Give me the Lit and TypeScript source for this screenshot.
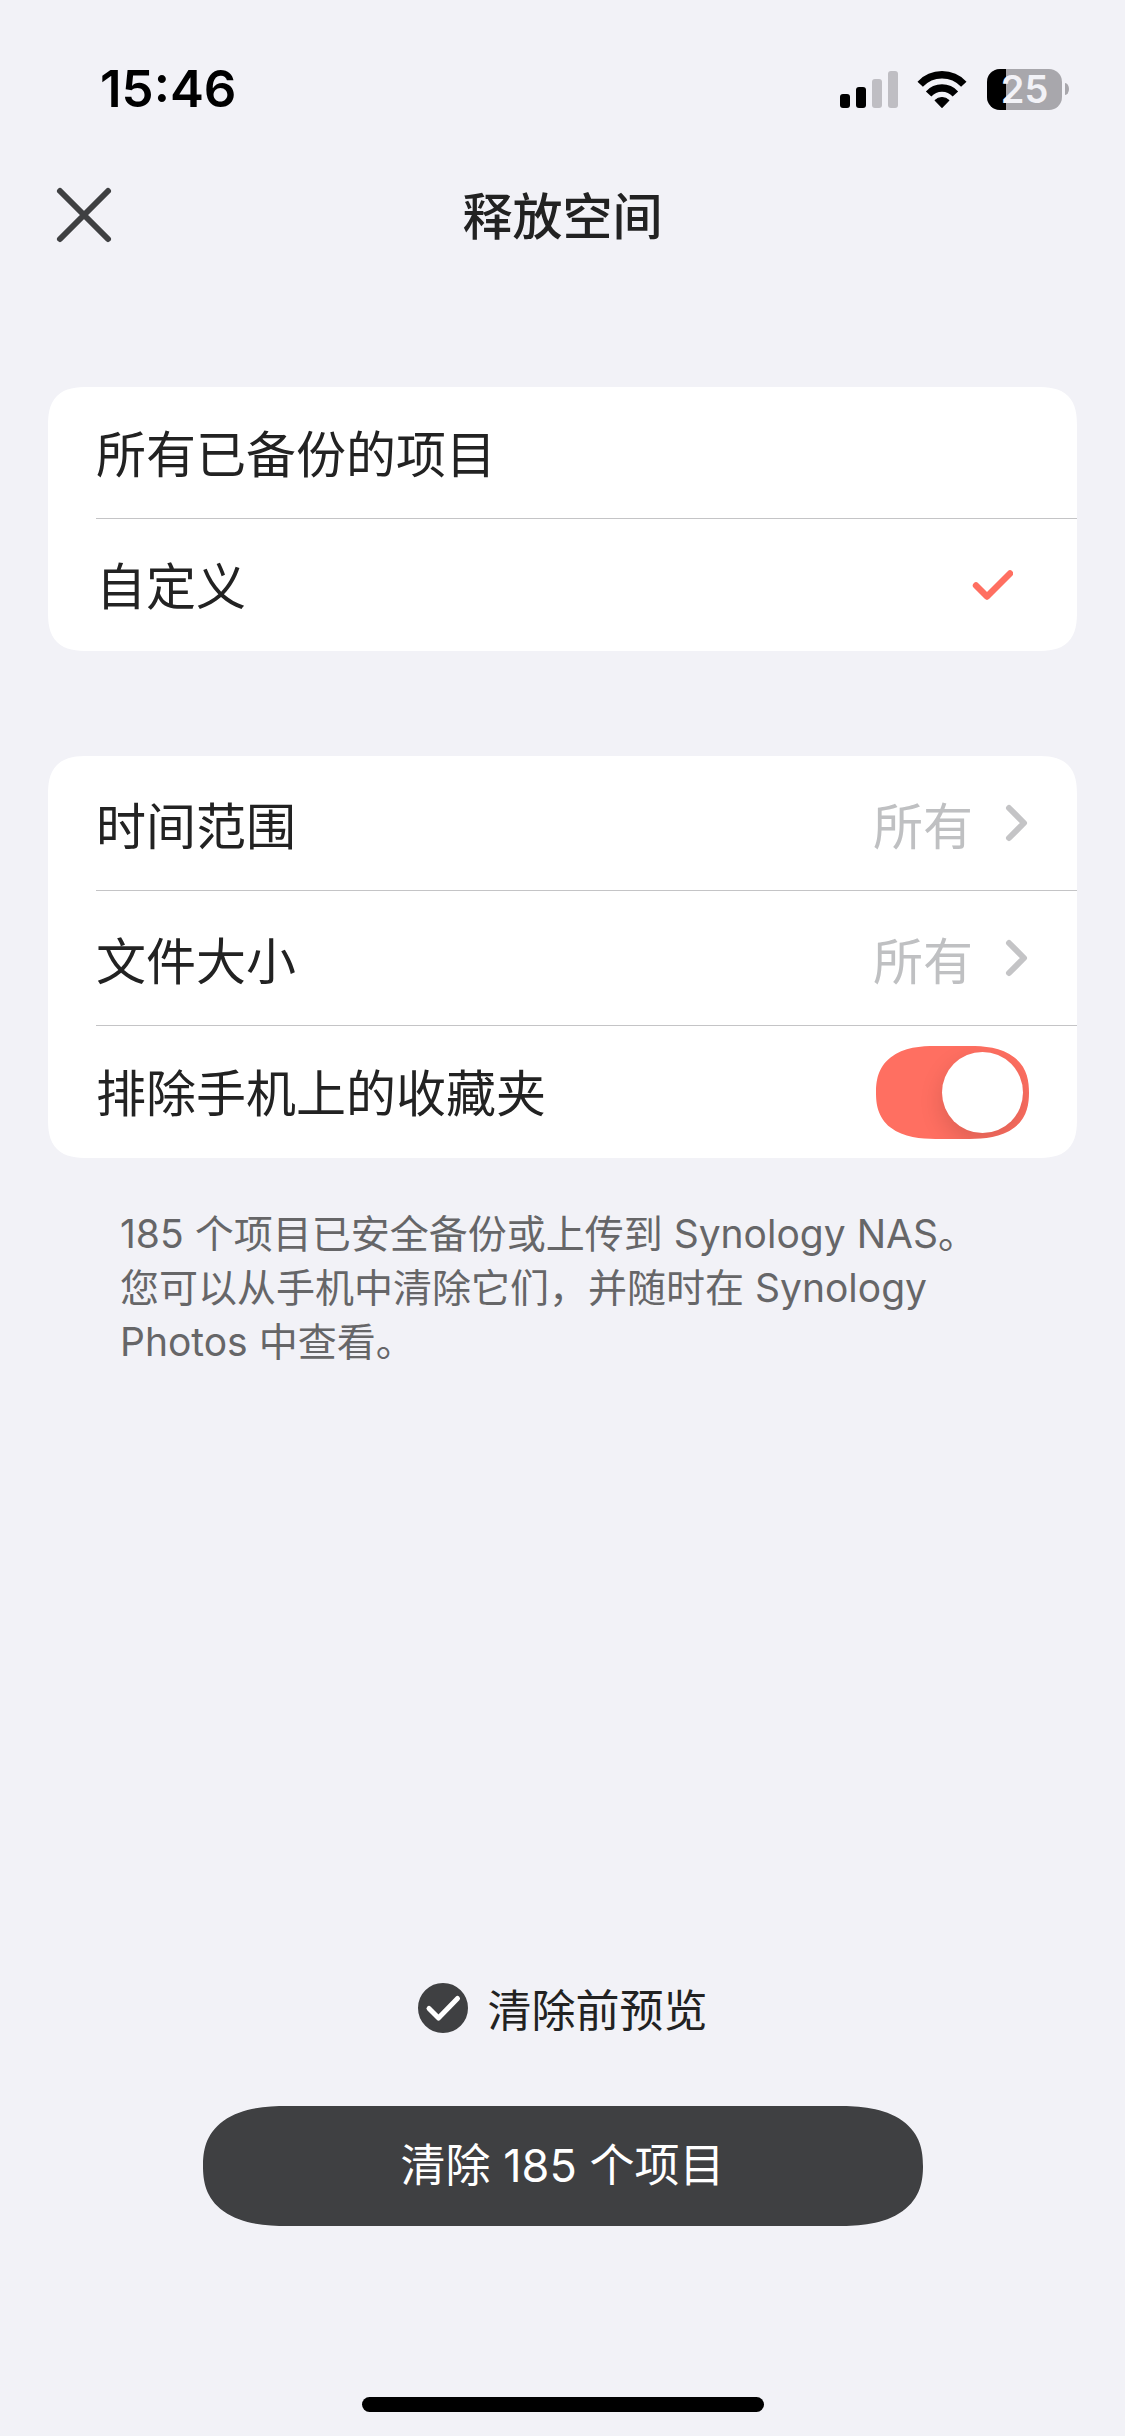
import { LitElement, html, css, svg } from "lit";
import { customElement, property, state } from "lit/decorators.js";

const hairline = css`#c4c4c6`;

@customElement("status-bar")
export class StatusBar extends LitElement {
  @property() time = "";
  @property({ type: Number }) battery = 0;

  static styles = css`
    :host {
      display: block;
      padding: 44px 56px 0 100px;
    }
    .bar {
      display: flex;
      align-items: center;
      justify-content: space-between;
      height: 90px;
      color: #000;
    }
    .time {
      font: 600 51px/60px Inter, "Liberation Sans", sans-serif;
    }
    .icons {
      display: flex;
      align-items: center;
    }
    .signal {
      width: 58px;
      height: 37px;
      margin-right: 19px;
    }
    .wifi {
      width: 50px;
      height: 37px;
      margin-right: 20px;
    }
    .battery {
      width: 75px;
      height: 41px;
      border-radius: 13px;
      background: #a8a7ac;
      display: grid;
      align-items: center;
    }
    .level,
    .percent {
      grid-area: 1 / 1;
    }
    .level {
      height: 41px;
      border-radius: 13px 0 0 13px;
      background: #000;
    }
    .percent {
      font: 600 38px/41px Inter, "Liberation Sans", sans-serif;
      color: #f2f2f7;
      text-align: center;
    }
    .cap {
      width: 4px;
      height: 12px;
      margin-left: 3px;
      border-radius: 0 4px 4px 0 / 0 6px 6px 0;
      background: #a8a7ac;
    }
  `;

  render() {
    const bars = [
      [0, 23, 14],
      [16, 16, 21],
      [32, 8, 29],
      [48, 0, 37],
    ];
    return html`
      <div class="bar">
        <span class="time">${this.time}</span>
        <div class="icons">
          <svg class="signal" viewBox="0 0 58 37" aria-hidden="true">
            ${bars.map(
              ([x, y, h], i) => svg`<rect x=${x} y=${y} width="10" height=${h} rx="3"
                fill=${i < 2 ? "#000" : "#bfbec3"} />`
            )}
          </svg>
          <svg class="wifi" viewBox="0 0 50 37" aria-hidden="true">
            <g fill="none" stroke="#000" stroke-width="7.4">
              <path d="M3.2 13.2A29.8 29.8 0 0 1 46.8 13.2" />
              <path d="M11.6 22.9A18.2 18.2 0 0 1 38.4 22.9" />
            </g>
            <path
              d="M18.2 29.3A9.6 9.6 0 0 1 31.8 29.3L25 36.4Z"
              stroke="#000"
              stroke-width="1.2"
              stroke-linejoin="round"
            />
          </svg>
          <div class="battery">
            <div class="level" style="width:${this.battery}%"></div>
            <span class="percent">${this.battery}</span>
          </div>
          <div class="cap"></div>
        </div>
      </div>
    `;
  }
}

@customElement("app-root")
export class AppRoot extends LitElement {
  @state() private scope = "custom";
  @state() private count = 185;

  static styles = css`
    :host {
      display: flex;
      flex-direction: column;
      min-height: 100vh;
      background: #f2f2f7;
      color: #222;
      font-family: "Noto Sans CJK SC", sans-serif;
    }
    * {
      box-sizing: border-box;
    }
    h1,
    p,
    fieldset {
      margin: 0;
      padding: 0;
      border: 0;
      min-width: 0;
    }
    button,
    input {
      appearance: none;
      margin: 0;
      padding: 0;
      border: 0;
      background: none;
      font: inherit;
      color: inherit;
    }
    svg {
      display: block;
      fill: none;
      stroke: currentColor;
      stroke-linecap: round;
      stroke-linejoin: round;
    }
    .nav {
      display: grid;
      grid-template-columns: 1fr auto 1fr;
      align-items: center;
      height: 162px;
      padding: 0 48px;
    }
    .close {
      width: 72px;
      height: 72px;
      color: #3f4042;
    }
    .title {
      padding-bottom: 4px;
      font-size: 50px;
      line-height: 72px;
      font-weight: 500;
    }
    .content {
      display: flex;
      flex-direction: column;
      padding: 91px 48px 0;
    }
    .card {
      background: #fff;
      border-radius: 32px;
      padding-left: 48px;
    }
    .card + .card {
      margin-top: 105px;
    }
    .row {
      display: flex;
      align-items: center;
      width: 100%;
      height: 133px;
      padding-right: 48px;
      font-size: 50px;
      line-height: 72px;
      text-align: left;
    }
    .row:first-child {
      height: 131px;
    }
    .row + .row {
      border-top: 1px solid ${hairline};
    }
    .row.link {
      height: 135px;
    }
    .row.link:first-child {
      height: 134px;
    }
    .label,
    .value {
      padding-bottom: 4px;
    }
    .link .label,
    .link .value {
      padding-bottom: 0;
    }
    .label {
      flex: 1;
    }
    .value {
      color: #bfc0c2;
    }
    .chevron {
      width: 24px;
      height: 40px;
      margin-left: 32px;
      color: ${hairline};
    }
    .pick {
      display: grid;
      width: 44px;
      height: 44px;
      margin-right: 16px;
    }
    .pick > * {
      grid-area: 1 / 1;
      width: 100%;
      height: 100%;
    }
    .pick svg {
      color: #ff6f61;
      visibility: hidden;
    }
    .pick input:checked + svg {
      visibility: visible;
    }
    .switch {
      flex: none;
      width: 153px;
      height: 93px;
      padding: 6px;
      border-radius: 50px / 47px;
      overflow: hidden;
      background: #e9e9eb;
      display: flex;
    }
    .switch:checked {
      background: #ff6f61;
      justify-content: flex-end;
    }
    .switch::before {
      content: "";
      width: 81px;
      height: 81px;
      border-radius: 50%;
      background: #fff;
      box-shadow: 0 9px 24px rgba(0, 0, 0, 0.14);
    }
    .note {
      margin-top: 49px;
      padding: 0 72px;
      font-family: Inter, "Noto Sans CJK SC", sans-serif;
      font-size: 39px;
      line-height: 54px;
      color: #666668;
    }
    .sentence {
      display: block;
    }
    .footer {
      display: flex;
      flex-direction: column;
      align-items: center;
      margin-top: auto;
      padding-bottom: 24px;
    }
    .preview {
      display: flex;
      align-items: center;
      gap: 20px;
      font-size: 44px;
      line-height: 64px;
    }
    .tick {
      display: grid;
      width: 50px;
      height: 50px;
    }
    .tick > * {
      grid-area: 1 / 1;
      width: 100%;
      height: 100%;
    }
    .tick input {
      border-radius: 50%;
      border: 3px solid #3f4042;
    }
    .tick input:checked {
      background: #3f4042;
    }
    .tick svg {
      color: #fff;
      pointer-events: none;
    }
    .clear {
      width: 64%;
      height: 120px;
      margin-top: 66px;
      border-radius: 68px / 60px;
      background: #3f4042;
      color: #fff;
      font-family: Inter, "Noto Sans CJK SC", sans-serif;
      font-size: 45px;
      line-height: 64px;
    }
    .home {
      width: 402px;
      height: 15px;
      margin-top: 171px;
      border-radius: 8px;
      background: #000;
    }
    @supports (corner-shape: squircle) {
      .card {
        border-radius: 40px;
        corner-shape: superellipse(1.45);
      }
      .switch {
        border-radius: 60px / 47px;
        corner-shape: superellipse(1.3);
      }
      .clear {
        border-radius: 84px / 60px;
        corner-shape: superellipse(1.3);
      }
    }
  `;

  private option(value: string, label: string) {
    return html`
      <label class="row">
        <span class="label">${label}</span>
        <span class="pick">
          <input
            type="radio"
            name="scope"
            value=${value}
            .checked=${this.scope === value}
            @change=${() => (this.scope = value)}
          />
          <svg viewBox="0 0 44 44" stroke-width="6.4" aria-hidden="true">
            <path d="M7 22.5L18 33.5L41 10.5" />
          </svg>
        </span>
      </label>
    `;
  }

  private link(label: string, value: string) {
    return html`
      <button class="row link" type="button">
        <span class="label">${label}</span>
        <span class="value">${value}</span>
        <svg class="chevron" viewBox="0 0 24 40" stroke-width="6" aria-hidden="true">
          <path d="M4 5L19 20L4 35" />
        </svg>
      </button>
    `;
  }

  render() {
    return html`
      <status-bar time="15:46" battery="25"></status-bar>
      <header class="nav">
        <button class="close" type="button" aria-label="关闭">
          <svg viewBox="0 0 72 72" stroke-width="6" aria-hidden="true">
            <path d="M12 12L60 60M60 12L12 60" />
          </svg>
        </button>
        <h1 class="title">释放空间</h1>
      </header>
      <main class="content">
        <fieldset class="card">
          ${this.option("all", "所有已备份的项目")} ${this.option("custom", "自定义")}
        </fieldset>
        <div class="card">
          ${this.link("时间范围", "所有")} ${this.link("文件大小", "所有")}
          <label class="row">
            <span class="label">排除手机上的收藏夹</span>
            <input class="switch" type="checkbox" role="switch" checked />
          </label>
        </div>
        <p class="note">
          <span class="sentence">${this.count} 个项目已安全备份或上传到 Synology NAS。</span>
          <span class="sentence">您可以从手机中清除它们，并随时在 Synology Photos 中查看。</span>
        </p>
      </main>
      <footer class="footer">
        <label class="preview">
          <span class="tick">
            <input type="checkbox" checked />
            <svg viewBox="0 0 50 50" stroke-width="5" aria-hidden="true">
              <path d="M11 25.5L20.5 35L39.5 15.5" />
            </svg>
          </span>
          <span>清除前预览</span>
        </label>
        <button class="clear" type="button">清除 ${this.count} 个项目</button>
        <div class="home"></div>
      </footer>
    `;
  }
}
